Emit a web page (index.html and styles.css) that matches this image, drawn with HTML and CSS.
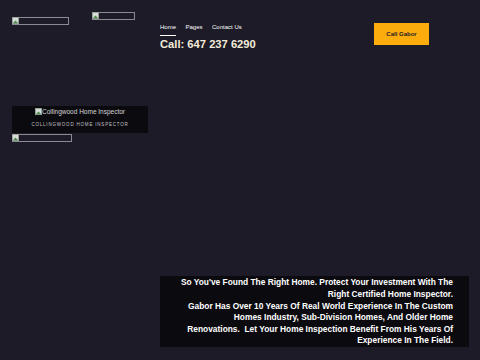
FILE: index.html
```html
<!DOCTYPE html>
<html lang="en">
<head>
  <meta charset="UTF-8">
  <meta name="viewport" content="width=device-width, initial-scale=1.0">
  <title>Collingwood Home Inspector</title>
  <link rel="stylesheet" href="styles.css">
</head>
<body>
  <aside class="side">
    <div class="logos">
      <span class="broken wide"><svg class="pic" viewBox="0 0 8 8"><rect x="0.5" y="0.5" width="7" height="7" fill="#d8dcd6" stroke="#9aa39a"/><path d="M1 7 L4 4 L7 7 Z" fill="#4f8a4f"/></svg></span>
      <span class="broken narrow"><svg class="pic" viewBox="0 0 8 8"><rect x="0.5" y="0.5" width="7" height="7" fill="#d8dcd6" stroke="#9aa39a"/><path d="M1 7 L4 4 L7 7 Z" fill="#4f8a4f"/></svg></span>
    </div>
    <div class="brand">
      <div class="brand-alt"><svg class="pic" viewBox="0 0 8 8"><rect x="0.5" y="0.5" width="7" height="7" fill="#d8dcd6" stroke="#9aa39a"/><path d="M1 7 L4 4 L7 7 Z" fill="#4f8a4f"/></svg>Collingwood Home Inspector</div>
      <div class="brand-sub">COLLINGWOOD HOME INSPECTOR</div>
    </div>
    <span class="broken under"><svg class="pic" viewBox="0 0 8 8"><rect x="0.5" y="0.5" width="7" height="7" fill="#d8dcd6" stroke="#9aa39a"/><path d="M1 7 L4 4 L7 7 Z" fill="#4f8a4f"/></svg></span>
  </aside>

  <main class="main">
    <header class="top">
      <div>
        <nav class="nav">
          <a href="#" class="active">Home</a>
          <a href="#">Pages</a>
          <a href="#">Contact Us</a>
        </nav>
        <div class="phone">Call: 647 237 6290</div>
      </div>
      <a href="#" class="cta">Call Gabor</a>
    </header>

    <section class="intro">
      <p>So You've Found The Right Home. Protect Your Investment With The<br>Right Certified Home Inspector.</p>
      <p>Gabor Has Over 10 Years Of Real World Experience In The Custom<br>Homes Industry, Sub-Division Homes, And Older Home<br>Renovations.&nbsp; Let Your Home Inspection Benefit From His Years Of<br>Experience In The Field.</p>
    </section>
  </main>
</body>
</html>
```

FILE: styles.css
```css
* {
  box-sizing: border-box;
}
body {
  margin: 0;
  min-height: 100vh;
  padding: 12px 11px 13px 12px;
  display: grid;
  grid-template-columns: 136px 1fr;
  column-gap: 12px;
  background: #1c1b27;
  font-family: "Liberation Sans", Arial, sans-serif;
  color: #fff;
}
.side {
  display: flex;
  flex-direction: column;
  align-items: flex-start;
}
.logos {
  display: flex;
  align-items: flex-start;
  gap: 23px;
}
.broken {
  display: flex;
  align-items: flex-start;
  height: 8px;
  border: 1px solid #8a8a92;
}
.pic {
  width: 7px;
  height: 7px;
  flex: none;
}
.broken .pic {
  margin: -1px 0 0 -1px;
}
.wide {
  width: 57px;
  margin-top: 5px;
}
.narrow {
  width: 43px;
}
.under {
  width: 60px;
  margin-top: 1px;
}
.brand {
  width: 136px;
  height: 27px;
  margin-top: 81px;
  padding-top: 1px;
  background: #0b0a0f;
  text-align: center;
}
.brand-alt {
  display: flex;
  justify-content: center;
  align-items: center;
  font-size: 6.5px;
  line-height: 9px;
  color: #d6d6d6;
}
.brand-sub {
  margin-top: 6px;
  font-size: 4.5px;
  line-height: 6px;
  letter-spacing: 0.8px;
  color: #c4c4c8;
}
.main {
  display: flex;
  flex-direction: column;
}
.top {
  display: flex;
  justify-content: space-between;
  align-items: flex-start;
  padding-right: 40px;
}
.nav {
  display: flex;
  gap: 9.5px;
  padding-top: 11px;
}
.nav a {
  color: #fff;
  text-decoration: none;
  font-size: 6px;
  line-height: 8px;
  padding-bottom: 4px;
  border-bottom: 1px solid transparent;
}
.nav a.active {
  border-bottom-color: #fff;
}
.phone {
  margin-top: 2px;
  font-size: 11.2px;
  line-height: 13px;
  font-weight: bold;
  color: #f4ecd9;
}
.cta {
  margin-top: 11px;
  width: 55px;
  height: 22px;
  display: flex;
  align-items: center;
  justify-content: center;
  background: #fcac0c;
  color: #1c1b27;
  font-size: 6px;
  font-weight: bold;
  text-decoration: none;
}
.intro {
  margin-top: auto;
  background: #0b0a0f;
  padding: 1px 16px 0 10px;
  text-align: right;
  font-size: 8.4px;
  line-height: 11.6px;
  font-weight: bold;
}
.intro p {
  margin: 0;
}
```
